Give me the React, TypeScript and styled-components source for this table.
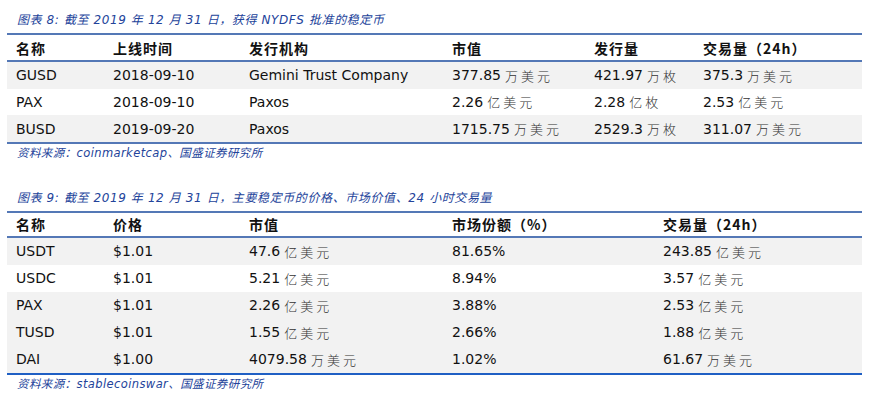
import React from "react";
import styled, { createGlobalStyle } from "styled-components";

const Global = createGlobalStyle`
  html, body { margin: 0; padding: 0; background: #ffffff; }
  body { font-family: "DejaVu Sans", "Noto Sans CJK SC", sans-serif; color: #111; }
`;

const Page = styled.div`
  width: 885px;
  height: 401px;
  padding-left: 7px;
  box-sizing: border-box;
  overflow: hidden;
`;

const Figure = styled.section`
  display: flex;
  flex-direction: column;
`;

const Title = styled.h2<{ $h: number }>`
  margin: 0;
  height: ${(p) => p.$h}px;
  padding-left: 10px;
  display: flex;
  align-items: flex-end;
  padding-bottom: 6px;
  box-sizing: border-box;
  font-family: "DejaVu Sans", "Noto Sans CJK SC", sans-serif;
  font-style: italic;
  font-weight: 400;
  font-size: 12px;
  color: #23439a;
  letter-spacing: 0.6px;
  white-space: pre;
`;

const Table = styled.div<{ $cols: string; $bottom: string }>`
  width: 855px;
  display: grid;
  grid-template-columns: ${(p) => p.$cols};
  border-top: 2px solid #5478b6;
  border-bottom: 2px solid ${(p) => p.$bottom};
`;

const Row = styled.div<{ $shade?: boolean; $head?: boolean; $h: number }>`
  display: contents;
  & > div {
    background: ${(p) => (p.$shade ? "#f2f2f2" : "#ffffff")};
    height: ${(p) => p.$h}px;
    ${(p) => (p.$head ? "border-bottom: 2px solid #5478b6;" : "")}
  }
`;

const Cell = styled.div`
  display: flex;
  align-items: center;
  padding-left: 9px;
  font-size: 14px;
  white-space: pre;
`;

const HeadCell = styled(Cell)`
  font-family: "Noto Sans CJK SC", "DejaVu Sans", sans-serif;
  font-weight: 700;
  font-size: 14px;
  letter-spacing: 1px;
  color: #111;
`;

const Unit = styled.span`
  font-family: "Noto Sans CJK SC", sans-serif;
  font-weight: 300;
  font-size: 13px;
  letter-spacing: 3px;
  color: #333;
  margin-left: 4px;
`;

const Source = styled.p`
  margin: 0;
  padding-left: 10px;
  height: 16px;
  display: flex;
  align-items: center;
  font-style: italic;
  font-size: 11.5px;
  color: #23439a;
  letter-spacing: 0.4px;
  white-space: pre;
`;

type Val = string | [string, string];

const renderVal = (v: Val) =>
  typeof v === "string" ? v : (
    <>
      {v[0]}
      <Unit>{v[1]}</Unit>
    </>
  );

const t1Head = ["名称", "上线时间", "发行机构", "市值", "发行量", "交易量（24h）"];
const t1Rows: Val[][] = [
  ["GUSD", "2018-09-10", "Gemini Trust Company", ["377.85", "万美元"], ["421.97", "万枚"], ["375.3", "万美元"]],
  ["PAX", "2018-09-10", "Paxos", ["2.26", "亿美元"], ["2.28", "亿枚"], ["2.53", "亿美元"]],
  ["BUSD", "2019-09-20", "Paxos", ["1715.75", "万美元"], ["2529.3", "万枚"], ["311.07", "万美元"]],
];

const t2Head = ["名称", "价格", "市值", "市场份额（%）", "交易量（24h）"];
const t2Rows: Val[][] = [
  ["USDT", "$1.01", ["47.6", "亿美元"], "81.65%", ["243.85", "亿美元"]],
  ["USDC", "$1.01", ["5.21", "亿美元"], "8.94%", ["3.57", "亿美元"]],
  ["PAX", "$1.01", ["2.26", "亿美元"], "3.88%", ["2.53", "亿美元"]],
  ["TUSD", "$1.01", ["1.55", "亿美元"], "2.66%", ["1.88", "亿美元"]],
  ["DAI", "$1.00", ["4079.58", "万美元"], "1.02%", ["61.67", "万美元"]],
];

export default function App() {
  return (
    <Page>
      <Global />
      <Figure>
        <Title $h={33}>图表 8: 截至 2019 年 12 月 31 日，获得 NYDFS 批准的稳定币</Title>
        <Table $cols="97px 136px 203px 142px 109px 168px" $bottom="#5478b6">
          <Row $head $h={25}>
            {t1Head.map((h) => (
              <HeadCell key={h}>{h}</HeadCell>
            ))}
          </Row>
          {t1Rows.map((r, i) => (
            <Row key={i} $shade={i % 2 === 0} $h={26.67}>
              {r.map((v, j) => (
                <Cell key={j}>{renderVal(v)}</Cell>
              ))}
            </Row>
          ))}
        </Table>
        <Source>资料来源：coinmarketcap、国盛证券研究所</Source>
      </Figure>
      <Figure>
        <Title $h={51}>图表 9: 截至 2019 年 12 月 31 日，主要稳定币的价格、市场价值、24 小时交易量</Title>
        <Table $cols="97px 136px 203px 211px 208px" $bottom="#1f5fc4">
          <Row $head $h={23}>
            {t2Head.map((h) => (
              <HeadCell key={h}>{h}</HeadCell>
            ))}
          </Row>
          {t2Rows.map((r, i) => (
            <Row key={i} $shade={i !== 1} $h={27}>
              {r.map((v, j) => (
                <Cell key={j}>{renderVal(v)}</Cell>
              ))}
            </Row>
          ))}
        </Table>
        <Source>资料来源：stablecoinswar、国盛证券研究所</Source>
      </Figure>
    </Page>
  );
}
